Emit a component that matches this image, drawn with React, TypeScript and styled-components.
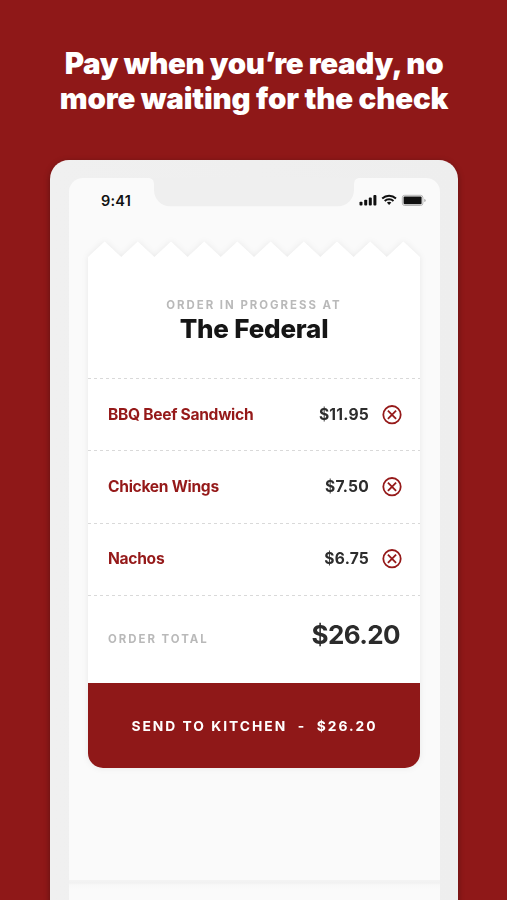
import React from "react";
import styled, { createGlobalStyle } from "styled-components";

const red = "#8f1818";

const GlobalStyle = createGlobalStyle`
  * { box-sizing: border-box; }
  body { margin: 0; background: ${red}; font-family: Inter, "Liberation Sans", sans-serif; }
`;

const Page = styled.main`
  height: 900px;
  overflow: hidden;
  background: ${red};
  display: flex;
  flex-direction: column;
`;

const Headline = styled.h1`
  flex: none;
  margin: 0 0 0 1px;
  height: 160px;
  padding-top: 46px;
  font-size: 29.5px;
  line-height: 35px;
  font-weight: 900;
  text-align: center;
  color: #fff;
`;

const HeadlineRow = styled.span<{ $spacing: number }>`
  display: block;
  white-space: nowrap;
  letter-spacing: ${(p) => p.$spacing}px;
`;

const Phone = styled.section`
  flex: none;
  width: 408px;
  height: 780px;
  margin-left: 50px;
  padding: 18px 18px 0 19px;
  border-radius: 19px;
  background: linear-gradient(90deg, #f0f0f0, #eeeeee);
  box-shadow: 0 2px 6px rgba(0, 0, 0, 0.35);
`;

const Screen = styled.div`
  height: 702px;
  border-radius: 14px 14px 0 0;
  background: #fafafa;
`;

const NextScreen = styled.div`
  height: 60px;
  background: linear-gradient(#f3f3f3 1px, #f1f1f1 3px, #f8f8f8 5px, #fafafa 10px);
`;

const StatusBar = styled.header`
  height: 63px;
  display: flex;
`;

const Clock = styled.div`
  width: 79px;
  padding: 14px 0 0 32px;
  font-size: 14.5px;
  line-height: 18px;
  font-weight: 600;
  letter-spacing: 0.2px;
  color: #111;
`;

const Notch = styled.svg`
  display: block;
  flex: none;
`;

const StatusIcons = styled.svg`
  display: block;
  flex: none;
  margin: 14px 0 0 -1px;
`;

const Receipt = styled.article`
  width: 332px;
  margin-left: 19px;
  filter: drop-shadow(0 0 3px rgba(0, 0, 0, 0.07));
`;

const TornEdge = styled.svg`
  display: block;
`;

const Paper = styled.div`
  background: #fff;
  border-radius: 0 0 15px 15px;
  overflow: hidden;
`;

const Venue = styled.div`
  height: 121px;
  padding-top: 40px;
  text-align: center;
`;

const Overline = styled.div`
  font-size: 11.4px;
  line-height: 16px;
  font-weight: 700;
  letter-spacing: 2px;
  color: #b9b9b9;
  white-space: nowrap;
`;

const VenueName = styled.h2`
  margin: 0;
  font-size: 26px;
  line-height: 31px;
  font-weight: 800;
  letter-spacing: -0.2px;
  color: #151515;
`;

const Rule = styled.div`
  height: 1px;
  background: repeating-linear-gradient(90deg, #fff 0 0.5px, #d9d9d9 0.5px 3.5px, #fff 3.5px 6px);
`;

const Item = styled.div`
  height: 71.4px;
  padding: 0 18px 0 20px;
  display: flex;
  align-items: center;
  font-size: 15.6px;
  line-height: 19px;
`;

const ItemName = styled.span`
  flex: 1;
  padding-bottom: 1px;
  color: #951919;
  font-weight: 700;
  letter-spacing: -0.3px;
`;

const Price = styled.span`
  padding-bottom: 1px;
  color: #2d2d2d;
  font-weight: 700;
  letter-spacing: 0.22px;
  margin-right: 13px;
`;

const Total = styled.div`
  height: 87px;
  padding: 0 20px;
  display: flex;
  justify-content: space-between;
`;

const TotalLabel = styled(Overline)`
  padding-top: 35px;
`;

const TotalAmount = styled.strong`
  padding-top: 23px;
  font-size: 26px;
  line-height: 32px;
  font-weight: 650;
  letter-spacing: -0.6px;
  color: #2b2b2b;
`;

const SendButton = styled.button`
  display: block;
  width: 100%;
  height: 85px;
  border: 0;
  padding: 0 0 0 1px;
  background: ${red};
  color: #fff;
  font-family: inherit;
  font-size: 13.8px;
  font-weight: 750;
  letter-spacing: 2px;
  white-space: pre;
`;

const teeth = Array.from({ length: 10 }, (_, i) => `L${i * 33.2 + 16.6} 0.5L${(i + 1) * 33.2} 16`).join("");

const Remove = () => (
  <svg width="20" height="20" viewBox="0 0 20 20" fill="none" stroke="#951919" strokeWidth="1.8">
    <circle cx="10" cy="9.700" r="8.7" />
    <path d="M5.900 5.600l8.200 8.200M14.100 5.600l-8.200 8.200" />
  </svg>
);

const items = [
  { name: "BBQ Beef Sandwich", price: "$11.95" },
  { name: "Chicken Wings", price: "$7.50" },
  { name: "Nachos", price: "$6.75" },
];

export default function App() {
  return (
    <>
      <GlobalStyle />
      <Page>
        <Headline>
          <HeadlineRow $spacing={-0.35}>Pay when you’re ready, no</HeadlineRow>
          <HeadlineRow $spacing={-0.18}>more waiting for the check</HeadlineRow>
        </Headline>
        <Phone>
          <Screen>
            <StatusBar>
              <Clock>9:41</Clock>
              <Notch width="212" height="29" viewBox="0 0 212 29">
                <path d="M0 0C4 0 6 2 6 7V12C6 21 13 28.300 22 28.300H190C199 28.300 206 21 206 12V7C206 2 208 0 212 0Z" fill="#efefef" />
              </Notch>
              <StatusIcons width="68" height="18" viewBox="0 0 68 18">
                <g fill="#101010">
                  <rect x="0.500" y="9.700" width="3" height="3.800" rx="0.900" />
                  <rect x="5.200" y="7.700" width="3" height="5.800" rx="0.900" />
                  <rect x="9.800" y="5.500" width="3" height="8" rx="0.900" />
                  <rect x="14.400" y="3" width="3" height="10.500" rx="0.900" />
                  <rect x="44.600" y="4.600" width="18" height="7.600" rx="1" />
                  <path d="M27.900 10.600a3.500 3.500 0 0 1 4.400 0l-2.200 2.400z" />
                </g>
                <g fill="none" stroke="#101010" strokeWidth="1.900">
                  <path d="M23.200 6.500a10 10 0 0 1 13.800 0" />
                  <path d="M25.700 9a6.400 6.400 0 0 1 8.800 0" />
                </g>
                <rect x="43.300" y="3.300" width="20.600" height="10.200" rx="2.400" fill="none" stroke="#b5b5b5" />
                <path d="M65.200 6.700q1.600.500 1.600 1.700t-1.600 1.700z" fill="#b5b5b5" />
              </StatusIcons>
            </StatusBar>
            <Receipt>
              <TornEdge width="332" height="16" viewBox="0 0 332 16">
                <path d={`M0 16${teeth}Z`} fill="#fff" />
              </TornEdge>
              <Paper>
                <Venue>
                  <Overline>ORDER IN PROGRESS AT</Overline>
                  <VenueName>The Federal</VenueName>
                </Venue>
                {items.map((item) => (
                  <React.Fragment key={item.name}>
                    <Rule />
                    <Item>
                      <ItemName>{item.name}</ItemName>
                      <Price>{item.price}</Price>
                      <Remove />
                    </Item>
                  </React.Fragment>
                ))}
                <Rule />
                <Total>
                  <TotalLabel>ORDER TOTAL</TotalLabel>
                  <TotalAmount>$26.20</TotalAmount>
                </Total>
                <SendButton>{"SEND TO KITCHEN  -  $26.20"}</SendButton>
              </Paper>
            </Receipt>
          </Screen>
          <NextScreen />
        </Phone>
      </Page>
    </>
  );
}
